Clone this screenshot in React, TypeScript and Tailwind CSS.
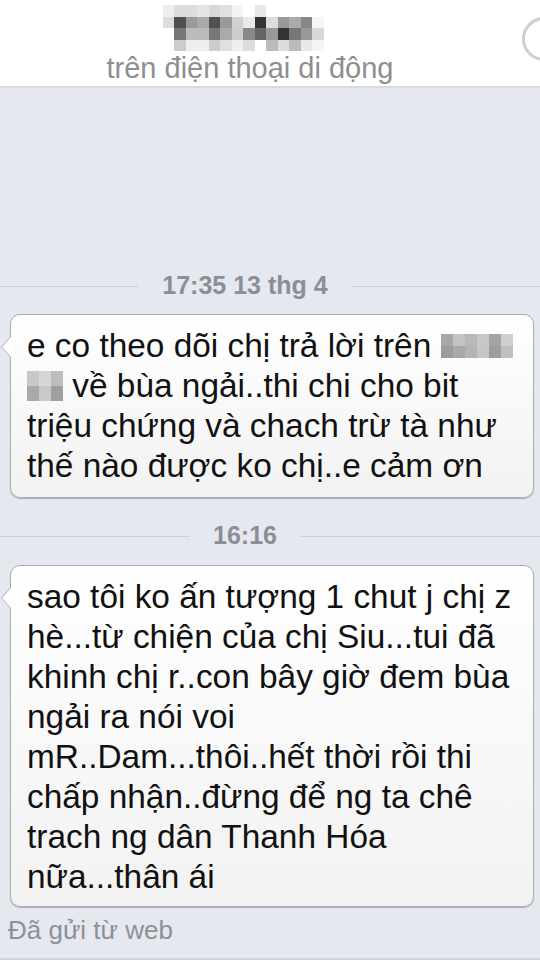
import React from "react";

const nameGrid = [
  ["#eeeeee", "#dddddd", "#dddddd", "#e5e5e5", "#d8d8d8", "#e0e0e0", "#f3f3f3", "#ffffff", "#e8e8e8", "#ffffff", "#ffffff", "#ffffff", "#ffffff", "#ffffff"],
  ["#dddddd", "#4f4f4f", "#999999", "#aaaaaa", "#505050", "#999999", "#d0d0d0", "#e8e8e8", "#333333", "#dddddd", "#999999", "#aaaaaa", "#888888", "#f5f5f5"],
  ["#ffffff", "#777777", "#bbbbbb", "#bbbbbb", "#777777", "#aaaaaa", "#cccccc", "#888888", "#666666", "#999999", "#333333", "#777777", "#999999", "#d8d8d8"],
  ["#ffffff", "#cccccc", "#eeeeee", "#eeeeee", "#cccccc", "#e0e0e0", "#eeeeee", "#dddddd", "#ffffff", "#bbbbbb", "#dddddd", "#bbbbbb", "#e8e8e8", "#f5f5f5"],
];

const blur1 = [
  ["#a8a8a8", "#c4c4c4", "#b8b8b8", "#c8c8c8", "#a4a4a4", "#cfcfcf"],
  ["#9c9c9c", "#a9a9a9", "#b4b4b4", "#c6c6c6", "#9e9e9e", "#c0c0c0"],
];
const blur2 = [
  ["#c8c8c8", "#d6d6d6", "#bdbdbd"],
  ["#a9a9a9", "#c9c9c9", "#9f9f9f"],
];

function Pixels({ grid, w, h }: { grid: string[][]; w: number; h: number }) {
  return (
    <span className="inline-flex flex-col align-middle">
      {grid.map((row, i) => (
        <span key={i} className="flex">
          {row.map((c, j) => (
            <span key={j} style={{ background: c, width: w, height: h }} className="block" />
          ))}
        </span>
      ))}
    </span>
  );
}

function Stamp({ text, left, right }: { text: string; left: string; right: string }) {
  return (
    <div className="flex items-center h-[40px]">
      <div className={`h-px bg-[#cdd0d6] ${left}`} />
      <div className="flex-1 text-center font-bold text-[25px] text-[#8a8e96]">{text}</div>
      <div className={`h-px bg-[#cdd0d6] ${right}`} />
    </div>
  );
}

function Bubble({ children, pad }: { children: React.ReactNode; pad: string }) {
  return (
    <div className="relative ml-[10px] mr-[6px]">
      <div className="absolute left-[-9px] top-[22px] w-0 h-0 border-y-[11px] border-y-transparent border-r-[10px] border-r-[#a9adb4]" />
      <div className="absolute left-[-8px] top-[23px] w-0 h-0 border-y-[10px] border-y-transparent border-r-[9px] border-r-white z-10" />
      <div className={`rounded-[10px] border border-[#a9adb4] bg-gradient-to-b from-white to-[#f2f2f2] shadow-[0_1px_1px_rgba(0,0,0,0.25)] pl-[16px] pr-[10px] pt-[11px] text-[33.4px] leading-[40px] text-[#111111] whitespace-nowrap ${pad}`}>
        {children}
      </div>
    </div>
  );
}

export default function App() {
  return (
    <div className="w-[540px] h-[960px] overflow-hidden bg-[#e6e8ef]" style={{ fontFamily: '"Liberation Sans", Arial, sans-serif' }}>
      <div className="relative bg-white h-[88px] border-b-2 border-[#d9dbe0] flex flex-col items-center pr-[40px]">
        <div className="mt-[5px] ml-[-14px]">
          <Pixels grid={nameGrid} w={11.5} h={11.5} />
        </div>
        <div className="text-[29px] leading-[30px] text-[#8e8e8e] mt-[2px]">trên điện thoại di động</div>
        <div className="absolute left-[522px] top-[17px] w-[44px] h-[44px] rounded-full border-[3px] border-[#cfcfcf]" />
      </div>

      <div className="h-[178px]" />
      <Stamp text="17:35 13 thg 4" left="w-[138px]" right="w-[188px]" />
      <div className="h-[8px]" />
      <Bubble pad="pb-[11px]">
        <div className="flex items-center h-[40px]">
          <span>e co theo dõi chị trả lời trên&nbsp;</span>
          <Pixels grid={blur1} w={12} h={12} />
        </div>
        <div className="flex items-center h-[40px]">
          <Pixels grid={blur2} w={12} h={15} />
          <span>&nbsp;về bùa ngải..thi chi cho bit</span>
        </div>
        <div>triệu chứng và chach trừ tà như</div>
        <div>thế nào được ko chị..e cảm ơn</div>
      </Bubble>

      <div className="h-[18px]" />
      <Stamp text="16:16" left="w-[190px]" right="w-[240px]" />
      <div className="h-[9px]" />
      <Bubble pad="pb-[9px]">
        <div>sao tôi ko ấn tượng 1 chut j chị z</div>
        <div>hè...từ chiện của chị Siu...tui đã</div>
        <div>khinh chị r..con bây giờ đem bùa</div>
        <div>ngải ra nói voi</div>
        <div>mR..Dam...thôi..hết thời rồi thi</div>
        <div>chấp nhận..đừng để ng ta chê</div>
        <div>trach ng dân Thanh Hóa</div>
        <div>nữa...thân ái</div>
      </Bubble>
      <div className="pl-[8px] pt-[8px] text-[26px] leading-[30px] text-[#8e9096]">Đã gửi từ web</div>
      <div className="mt-[13px] h-[2px] bg-[#cfd2d8]" />
    </div>
  );
}
